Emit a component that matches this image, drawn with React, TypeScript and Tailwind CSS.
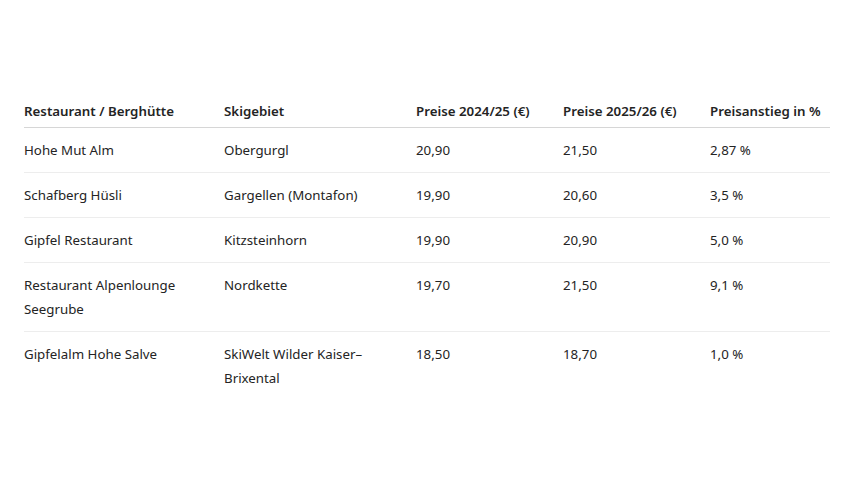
const rows = [
  ["Hohe Mut Alm", "Obergurgl", "20,90", "21,50", "2,87 %"],
  ["Schafberg Hüsli", "Gargellen (Montafon)", "19,90", "20,60", "3,5 %"],
  ["Gipfel Restaurant", "Kitzsteinhorn", "19,90", "20,90", "5,0 %"],
  ["Restaurant Alpenlounge Seegrube", "Nordkette", "19,70", "21,50", "9,1 %"],
  ["Gipfelalm Hohe Salve", "SkiWelt Wilder Kaiser–Brixental", "18,50", "18,70", "1,0 %"],
];

const headers = ["Restaurant / Berghütte", "Skigebiet", "Preise 2024/25 (€)", "Preise 2025/26 (€)", "Preisanstieg in %"];

export default function App() {
  return (
    <div className="w-[848px] h-[477px] bg-white pt-[99px] pl-6 text-[#242424] font-['Segoe_UI','Noto_Sans',sans-serif] text-[13.3px]">
      <table className="w-[806px] border-collapse table-fixed">
        <colgroup>
          <col className="w-[200px]" />
          <col className="w-[192px]" />
          <col className="w-[147px]" />
          <col className="w-[147px]" />
          <col />
        </colgroup>
        <thead>
          <tr className="border-b border-[#d6d6d6]">
            {headers.map((h) => (
              <th key={h} className="text-left font-semibold leading-6 pb-1 pr-4 last:pr-0 align-top whitespace-nowrap">
                {h}
              </th>
            ))}
          </tr>
        </thead>
        <tbody>
          {rows.map((r, i) => (
            <tr key={i} className={i < rows.length - 1 ? "border-b border-[#ededed]" : ""}>
              {r.map((c, j) => (
                <td key={j} className="leading-6 py-[10px] pr-4 last:pr-0 align-top">
                  {c}
                </td>
              ))}
            </tr>
          ))}
        </tbody>
      </table>
    </div>
  );
}
